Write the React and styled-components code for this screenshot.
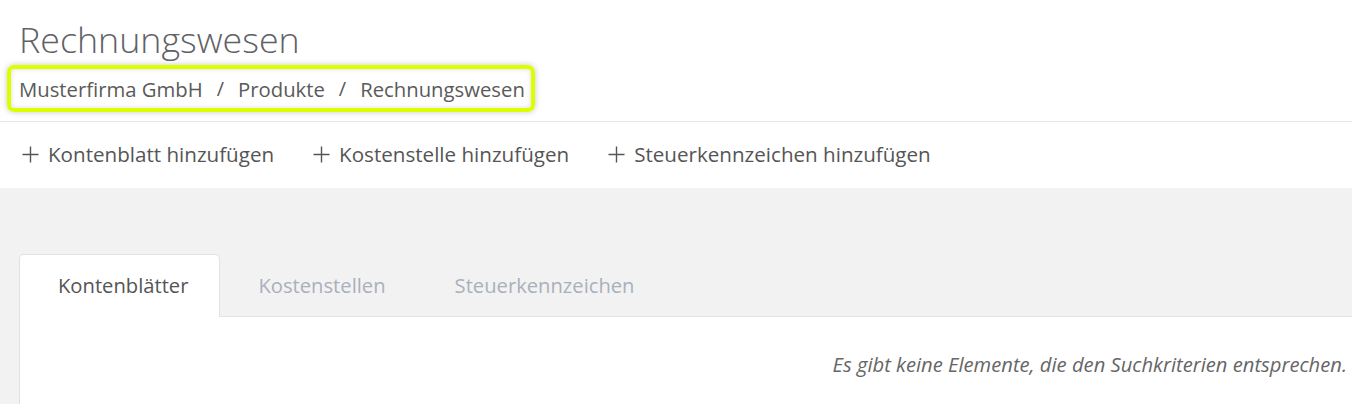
import React from "react";
import styled, { createGlobalStyle } from "styled-components";

const Global = createGlobalStyle`
  html, body { margin: 0; padding: 0; background: #f2f2f2; }
  body { font-family: "Open Sans", "Noto Sans", sans-serif; color: #5a5a5a; }
  * { box-sizing: border-box; }
`;

const Page = styled.div`
  width: 1352px;
  height: 404px;
  overflow: hidden;
  display: flex;
  flex-direction: column;
`;

const Header = styled.header`
  flex-shrink: 0;
  background: #fff;
  padding: 17px 0 0 19px;
  height: 122px;
  border-bottom: 1px solid #e6e6e6;
`;

const Title = styled.h1`
  margin: 0;
  font-size: 35.8px;
  font-weight: 300;
  line-height: 44px;
  color: #606266;
`;

const Highlight = styled.nav`
  display: inline-flex;
  align-items: center;
  margin: 4px 0 0 -12px;
  height: 47px;
  padding: 0 6px 0 8px;
  border: 4px solid #dcff00;
  border-radius: 7px;
  box-shadow: 0 0 6px rgba(0, 0, 0, 0.22), inset 0 0 5px rgba(0, 0, 0, 0.14);
`;

const Crumb = styled.span`
  font-size: 20.3px;
  color: #5a5a5a;
`;

const Sep = styled.span`
  font-size: 20px;
  color: #5a5a5a;
  margin: 0 14px;
`;

const Actions = styled.div`
  flex-shrink: 0;
  background: #fff;
  height: 66px;
  display: flex;
  align-items: center;
  gap: 39px;
  padding: 0 0 2px 22px;
`;

const ActionButton = styled.button`
  display: inline-flex;
  align-items: center;
  gap: 9px;
  border: 0;
  background: none;
  padding: 0;
  font-family: inherit;
  font-size: 20.6px;
  color: #555;
  cursor: pointer;
`;

const Main = styled.main`
  flex: 1;
  padding: 66px 0 0 19px;
`;

const Tabs = styled.div`
  display: flex;
  align-items: flex-end;
`;

const Tab = styled.div`
  height: 63px;
  display: flex;
  align-items: center;
  padding: 0 ${(p) => (p.$active ? "31px 2px 38px" : "34px 2px 33px")};
  margin-right: ${(p) => (p.$active ? "4px" : "0")};
  font-size: 20.2px;
  color: ${(p) => (p.$active ? "#555" : "#aab0bb")};
  background: ${(p) => (p.$active ? "#fff" : "transparent")};
  border: 1px solid ${(p) => (p.$active ? "#e2e2e2" : "transparent")};
  border-bottom: 0;
  border-radius: 5px 5px 0 0;
  margin-bottom: -1px;
  position: relative;
  z-index: 1;
`;

const Panel = styled.section`
  background: #fff;
  border-top: 1px solid #e2e2e2;
  border-left: 1px solid #e2e2e2;
  height: 100px;
  display: flex;
  justify-content: flex-end;
  padding: 33px 5px 0 0;
`;

const Empty = styled.p`
  margin: 0;
  font-style: italic;
  font-size: 20.2px;
  color: #666;
`;

const Plus = () => (
  <svg width="17" height="17" viewBox="0 0 17 17" fill="none" stroke="#555" strokeWidth="1.4">
    <path d="M8.5 0.5v16M0.5 8.5h16" />
  </svg>
);

export default function App() {
  return (
    <Page>
      <Global />
      <Header>
        <Title>Rechnungswesen</Title>
        <Highlight>
          <Crumb>Musterfirma GmbH</Crumb>
          <Sep>/</Sep>
          <Crumb>Produkte</Crumb>
          <Sep>/</Sep>
          <Crumb>Rechnungswesen</Crumb>
        </Highlight>
      </Header>
      <Actions>
        <ActionButton><Plus />Kontenblatt hinzufügen</ActionButton>
        <ActionButton><Plus />Kostenstelle hinzufügen</ActionButton>
        <ActionButton><Plus />Steuerkennzeichen hinzufügen</ActionButton>
      </Actions>
      <Main>
        <Tabs>
          <Tab $active>Kontenblätter</Tab>
          <Tab>Kostenstellen</Tab>
          <Tab>Steuerkennzeichen</Tab>
        </Tabs>
        <Panel>
          <Empty>Es gibt keine Elemente, die den Suchkriterien entsprechen.</Empty>
        </Panel>
      </Main>
    </Page>
  );
}
